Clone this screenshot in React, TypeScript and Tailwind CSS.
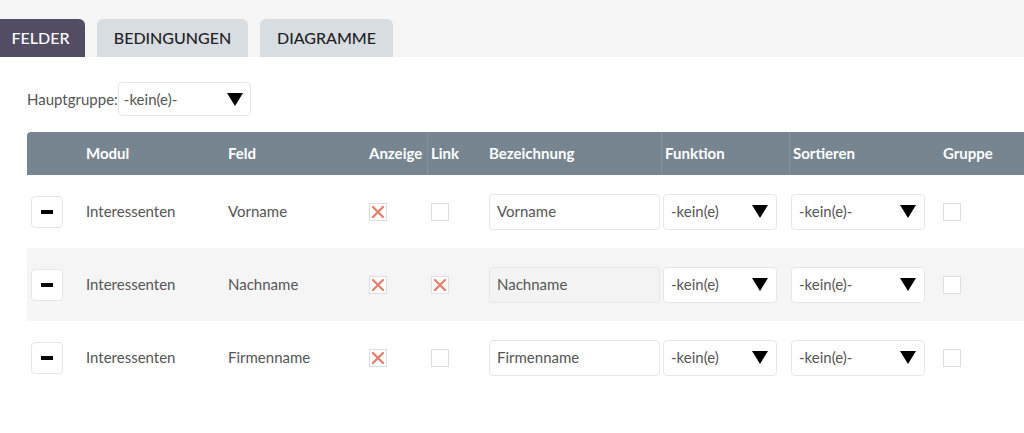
import React from "react";

type Row = {
  feld: string;
  anzeige: boolean;
  link: boolean;
  disabled?: boolean;
};

const ROWS: Row[] = [
  { feld: "Vorname", anzeige: true, link: false },
  { feld: "Nachname", anzeige: true, link: true, disabled: true },
  { feld: "Firmenname", anzeige: true, link: false },
];

function Triangle() {
  return (
    <svg width="16" height="13" viewBox="0 0 16 13" className="shrink-0">
      <polygon points="0,0 16,0 8,13" fill="#000" />
    </svg>
  );
}

function Select({ value, width }: { value: string; width: string }) {
  return (
    <div
      className={`flex h-[36px] items-center justify-between rounded-[4px] border border-[#e6e6e6] bg-white pl-[7px] pr-[8px] ${width}`}
    >
      <span>{value}</span>
      <Triangle />
    </div>
  );
}

function Check({ checked }: { checked: boolean }) {
  return (
    <div className="flex h-[18px] w-[18px] items-center justify-center border border-[#dedede] bg-white">
      {checked && (
        <svg width="14" height="14" viewBox="0 0 14 14">
          <path d="M2 2 L12 12 M12 2 L2 12" stroke="#e8806e" strokeWidth="2.4" strokeLinecap="round" />
        </svg>
      )}
    </div>
  );
}

export default function App() {
  return (
    <div className="h-[433px] w-[1024px] overflow-hidden bg-white text-[15px] text-[#555] font-['Lato','Open_Sans',sans-serif]">
      {/* tabs */}
      <div className="flex h-[57px] items-end gap-[12px] bg-[#f5f5f5]">
        <div className="flex h-[38px] w-[85px] items-center justify-center rounded-tr-[6px] bg-[#534d64] pr-[4px] text-[16px] font-medium text-white">
          FELDER
        </div>
        <div className="flex h-[38px] w-[151px] items-center justify-center rounded-t-[6px] bg-[#d8dde2] text-[16px] font-medium text-[#222]">
          BEDINGUNGEN
        </div>
        <div className="flex h-[38px] w-[133px] items-center justify-center rounded-t-[6px] bg-[#d8dde2] text-[16px] font-medium text-[#222]">
          DIAGRAMME
        </div>
      </div>

      {/* Hauptgruppe */}
      <div className="flex items-center pl-[27px] pt-[25px]">
        <span className="text-[15px]">Hauptgruppe:</span>
        <div className="flex h-[34px] w-[133px] items-center justify-between rounded-[4px] border border-[#e6e6e6] pl-[5px] pr-[7px] text-[15px]">
          <span>-kein(e)-</span>
          <Triangle />
        </div>
      </div>

      {/* table */}
      <div className="ml-[27px] mt-[16px]">
        <div className="grid h-[43px] grid-cols-[55px_142px_141px_62px_58px_176px_128px_150px_1fr] items-center rounded-tl-[4px] bg-[#778590] font-bold text-white">
          <div />
          <div className="pl-[4px]">Modul</div>
          <div className="pl-[4px]">Feld</div>
          <div className="pl-[4px]">Anzeige</div>
          <div className="flex h-full items-center border-l border-[#8593a0] pl-[3px]">Link</div>
          <div className="pl-[4px]">Bezeichnung</div>
          <div className="flex h-full items-center border-l border-[#8593a0] pl-[3px]">Funktion</div>
          <div className="flex h-full items-center border-l border-[#8593a0] pl-[3px]">Sortieren</div>
          <div className="pl-[4px]">Gruppe</div>
        </div>
        {ROWS.map((r, i) => (
          <div
            key={r.feld}
            className={`grid h-[73px] grid-cols-[55px_142px_141px_62px_58px_176px_128px_150px_1fr] items-center ${
              i % 2 === 1 ? "bg-[#f5f5f5]" : "bg-white"
            }`}
          >
            <div className="pl-[4px]">
              <div className="flex h-[32px] w-[32px] items-center justify-center rounded-[4px] border border-[#e6e6e6] bg-white">
                <div className="h-[4px] w-[12px] bg-black" />
              </div>
            </div>
            <div className="pl-[4px]">Interessenten</div>
            <div className="pl-[4px]">{r.feld}</div>
            <div className="pl-[4px]">
              <Check checked={r.anzeige} />
            </div>
            <div className="pl-[4px]">
              <Check checked={r.link} />
            </div>
            <div className="pl-[4px]">
              <div
                className={`flex h-[36px] w-[171px] items-center rounded-[4px] border border-[#e6e6e6] pl-[7px] ${
                  r.disabled ? "bg-[#f3f3f3]" : "bg-white"
                }`}
              >
                {r.feld}
              </div>
            </div>
            <div className="pl-[2px]">
              <Select value="-kein(e)" width="w-[114px]" />
            </div>
            <div className="pl-[2px]">
              <Select value="-kein(e)-" width="w-[134px]" />
            </div>
            <div className="pl-[4px]">
              <div className="h-[18px] w-[18px] border border-[#dedede] bg-white" />
            </div>
          </div>
        ))}
      </div>
    </div>
  );
}
